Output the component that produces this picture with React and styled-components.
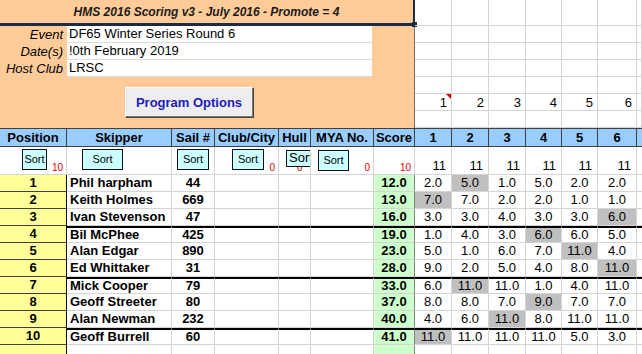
import React from 'react'
import styled, { createGlobalStyle, css } from 'styled-components';

const GlobalStyle = createGlobalStyle`
    body {
        margin: 0;
        background: #ffffff;
        font-family: "Liberation Sans", Arial, sans-serif;
        overflow: hidden;
    }
`;

const COLS = '67px 105px 43px 64px 32px 63px 41px 37px 37px 37px 36px 36px 39px 1fr';
const GRID = '#d4d4d4';
const DARK = '#404040';

const Sheet = styled.div`
    width: 642px;
    height: 354px;
    overflow: hidden;
    font-size: 13px;
    color: #000;
`;

const Top = styled.div`
    display: flex;
    height: 128px;
`;

const Panel = styled.div`
    width: 415px;
    background: #ffcc99;
    display: flex;
    flex-direction: column;
    box-sizing: border-box;
    border-right: 1px solid #707070;
`;

const Title = styled.div`
    position: relative;
    height: 26px;
    box-sizing: border-box;
    border-bottom: 3px solid #1c2b44;
    margin-right: -1px;
    border-right: 2px solid #1c2b44;
    display: flex;
    align-items: center;
    justify-content: center;
    font-size: 12px;
    font-weight: bold;
    font-style: italic;
    color: #1a1a1a;
    &::after {
        content: '';
        position: absolute;
        right: -4px;
        bottom: -4px;
        width: 5px;
        height: 5px;
        background: #1c2b44;
    }
`;

const InfoRow = styled.div`
    display: flex;
    height: 17px;
`;

const Label = styled.div`
    width: 67px;
    box-sizing: border-box;
    padding-right: 4px;
    text-align: right;
    font-style: italic;
    line-height: 17px;
`;

const Field = styled.div`
    width: 305px;
    background: #fff;
    box-sizing: border-box;
    border-bottom: 1px solid #dcdcdc;
    padding-left: 2px;
    line-height: 16px;
`;

const ButtonRow = styled.div`
    flex: 1;
    display: flex;
    align-items: flex-start;
    padding: 10px 0 0 125px;
`;

const OptionsButton = styled.button`
    width: 128px;
    height: 30px;
    background: #eeeef0;
    border: 1px solid #fff;
    border-right-color: #777;
    border-bottom-color: #777;
    box-shadow: 1px 1px 0 #444;
    font-family: inherit;
    font-size: 13px;
    font-weight: bold;
    color: #2020b8;
    padding: 0;
`;

const RightGrid = styled.div`
    flex: 1;
    display: grid;
    grid-template-columns: 37px 37px 37px 36px 36px 39px 1fr;
    grid-template-rows: 26px repeat(6, 17px);
`;

const GridCell = styled.div`
    position: relative;
    box-sizing: border-box;
    border-right: 1px solid ${GRID};
    border-bottom: 1px solid ${GRID};
    text-align: right;
    padding-right: 4px;
    line-height: 18px;
    ${p => p.$note && css`
        &::after {
            content: '';
            position: absolute;
            top: 0;
            right: 0;
            border-top: 5px solid #cc0000;
            border-left: 5px solid transparent;
        }
    `}
`;

const Table = styled.div`
    display: grid;
    grid-template-columns: ${COLS};
    grid-template-rows: 19px 28px repeat(10, 17px) 17px;
`;

const Head = styled.div`
    background: #99ccff;
    box-sizing: border-box;
    border-top: 1px solid ${DARK};
    border-bottom: 1px solid ${DARK};
    border-right: 1px solid ${DARK};
    font-weight: bold;
    text-align: center;
    line-height: 17px;
    white-space: nowrap;
    overflow: hidden;
`;

const SortCell = styled.div`
    box-sizing: border-box;
    border-right: 1px solid ${GRID};
    border-bottom: 1px solid ${GRID};
    display: flex;
    align-items: flex-start;
    padding-top: ${p => p.$top || 2}px;
    padding-left: ${p => p.$left || 0}px;
    overflow: hidden;
    position: relative;
`;

const SortButton = styled.div`
    flex: none;
    width: ${p => p.$w}px;
    height: ${p => p.$h || 21}px;
    box-sizing: border-box;
    background: #ccffff;
    border: 1px solid #111;
    font-size: 11px;
    text-align: center;
    line-height: 19px;
    position: relative;
    z-index: 1;
    ${p => p.$clipped && css`
        font-size: 13px;
        text-align: left;
        padding-left: 2px;
        line-height: 13px;
    `}
`;

const Count = styled.span`
    margin-left: auto;
    align-self: flex-end;
    padding-right: 3px;
    padding-bottom: 1px;
    font-size: 10px;
    color: #e00000;
    line-height: 10px;
    ${p => p.$under && css`
        position: absolute;
        left: 18px;
        bottom: 0;
    `}
`;

const RaceCount = styled.div`
    box-sizing: border-box;
    border-right: 1px solid ${GRID};
    border-bottom: 1px solid ${GRID};
    padding-right: 5px;
    display: flex;
    align-items: flex-end;
    justify-content: flex-end;
    padding-bottom: 1px;
    line-height: 15px;
`;

const Cell = styled.div`
    box-sizing: border-box;
    border-right: 1px solid ${GRID};
    border-bottom: 1px solid ${GRID};
    line-height: 16px;
    white-space: nowrap;
    overflow: hidden;
    text-align: ${p => p.$align || 'center'};
    font-weight: ${p => (p.$bold ? 'bold' : 'normal')};
    background: ${p => p.$bg || '#fff'};
    ${p => p.$pad && css`padding-left: ${p.$pad}px;`}
    ${p => p.$sep && css`border-top: 2px solid #000; line-height: 14px;`}
    ${p => p.$pos && css`
        border-right: 1px solid #111;
        border-bottom: 1px solid ${DARK};
    `}
    ${p => p.$scoreEdge && css`border-right: 1px solid #808080;`}
`;

const results = [
    [1, 'Phil harpham', 44, '12.0', [2, 5, 1, 5, 2, 2], 1],
    [2, 'Keith Holmes', 669, '13.0', [7, 7, 2, 2, 1, 1], 0],
    [3, 'Ivan Stevenson', 47, '16.0', [3, 3, 4, 3, 3, 6], 5],
    [4, 'Bil McPhee', 425, '19.0', [1, 4, 3, 6, 6, 5], 3],
    [5, 'Alan Edgar', 890, '23.0', [5, 1, 6, 7, 11, 4], 4],
    [6, 'Ed Whittaker', 31, '28.0', [9, 2, 5, 4, 8, 11], 5],
    [7, 'Mick Cooper', 79, '33.0', [6, 11, 11, 1, 4, 11], 1],
    [8, 'Geoff Streeter', 80, '37.0', [8, 8, 7, 9, 7, 7], 3],
    [9, 'Alan Newman', 232, '40.0', [4, 6, 11, 8, 11, 11], 2],
    [10, 'Geoff Burrell', 60, '41.0', [11, 11, 11, 11, 5, 3], 0],
];

const breaks = [4, 7, 10];
const races = [1, 2, 3, 4, 5, 6];
const headings = ['Position', 'Skipper', 'Sail #', 'Club/City', 'Hull', 'MYA No.', 'Score'];

const App = () => {
    return (
        <Sheet>
            <GlobalStyle />
            <Top>
                <Panel>
                    <Title>HMS 2016 Scoring v3 - July 2016 - Promote = 4</Title>
                    <InfoRow><Label>Event</Label><Field>DF65 Winter Series Round 6</Field></InfoRow>
                    <InfoRow><Label>Date(s)</Label><Field>!0th February 2019</Field></InfoRow>
                    <InfoRow><Label>Host Club</Label><Field>LRSC</Field></InfoRow>
                    <ButtonRow>
                        <OptionsButton>Program Options</OptionsButton>
                    </ButtonRow>
                </Panel>
                <RightGrid>
                    {Array.from({ length: 7 * 7 }).map((_, i) => {
                        const row = Math.floor(i / 7);
                        const col = i % 7;
                        const label = row === 5 && col < 6 ? col + 1 : '';
                        return <GridCell key={i} $note={row === 5 && col === 0}>{label}</GridCell>;
                    })}
                </RightGrid>
            </Top>
            <Table>
                {headings.map(h => <Head key={h}>{h}</Head>)}
                {races.map(r => <Head key={r}>{r}</Head>)}
                <Head />

                <SortCell $left={22}><SortButton $w={25}>Sort</SortButton><Count>10</Count></SortCell>
                <SortCell $left={15}><SortButton $w={41}>Sort</SortButton></SortCell>
                <SortCell $left={5}><SortButton $w={32}>Sort</SortButton></SortCell>
                <SortCell $left={17}><SortButton $w={32}>Sort</SortButton><Count>0</Count></SortCell>
                <SortCell $left={7} $top={3}><Count $under>0</Count><SortButton $w={34} $h={17} $clipped>Sort</SortButton></SortCell>
                <SortCell $left={7} $top={3}><SortButton $w={31}>Sort</SortButton><Count>0</Count></SortCell>
                <SortCell><Count>10</Count></SortCell>
                {races.map(r => <RaceCount key={r}>11</RaceCount>)}
                <RaceCount />

                {results.map(([pos, name, sail, score, marks, drop]) => {
                    const sep = breaks.includes(pos);
                    return (
                        <React.Fragment key={pos}>
                            <Cell $pos $bold $bg="#ffff99">{pos}</Cell>
                            <Cell $bold $align="left" $pad={3} $sep={sep}>{name}</Cell>
                            <Cell $bold $sep={sep}>{sail}</Cell>
                            <Cell $sep={sep} />
                            <Cell $sep={sep} />
                            <Cell $sep={sep} />
                            <Cell $bold $bg="#ccffcc" $sep={sep} $scoreEdge>{score}</Cell>
                            {marks.map((m, i) => (
                                <Cell key={i} $sep={sep} $bg={i === drop ? '#c0c0c0' : '#fff'}>
                                    {m.toFixed(1)}
                                </Cell>
                            ))}
                            <Cell $sep={sep} />
                        </React.Fragment>
                    );
                })}
                <Cell $pos $bg="#ffff99" />
                <Cell /><Cell /><Cell /><Cell /><Cell />
                <Cell $bg="#ccffcc" $scoreEdge />
                {races.map(r => <Cell key={r} />)}
                <Cell />
            </Table>
        </Sheet>
    )
}

export default App
